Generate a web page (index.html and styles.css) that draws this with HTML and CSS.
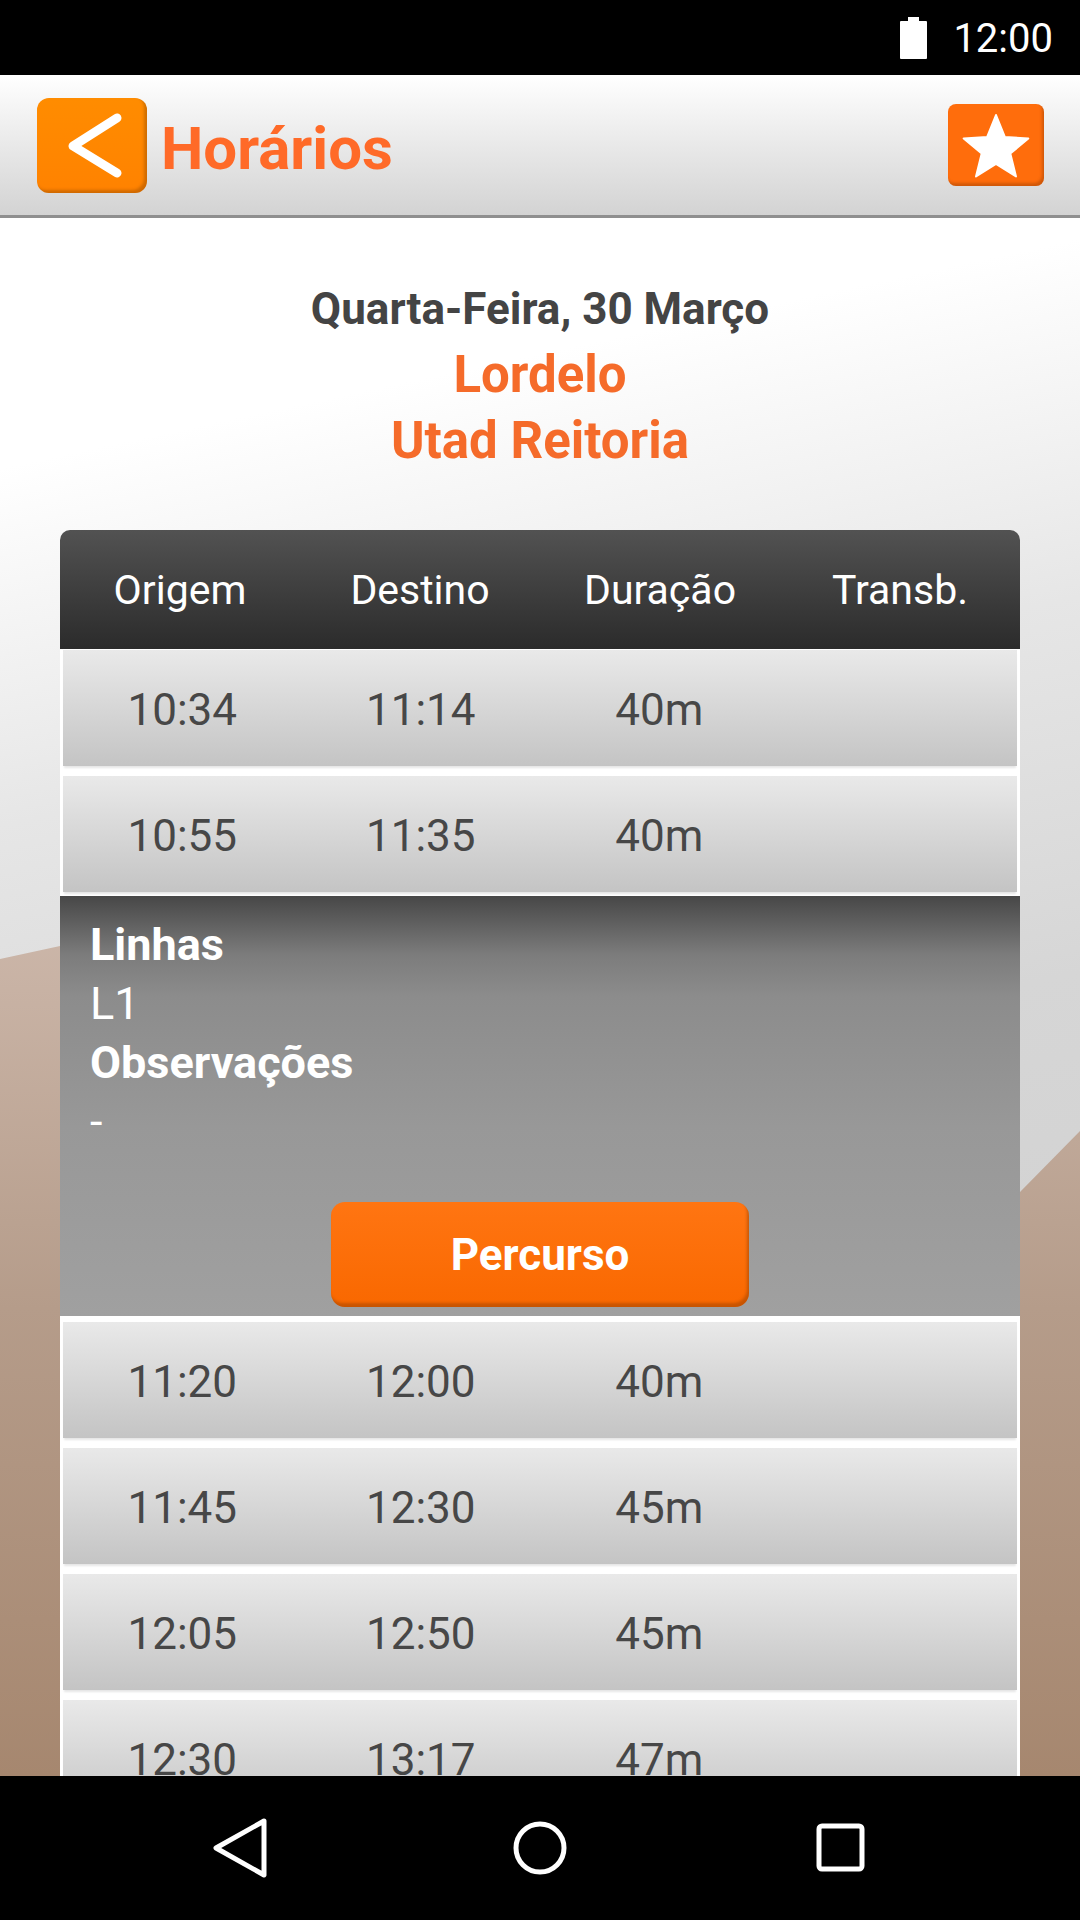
FILE: index.html
```html
<!DOCTYPE html>
<html lang="pt-PT">
<head>
    <meta charset="UTF-8">
    <meta name="viewport" content="width=device-width, initial-scale=1.0">
    <title>Horários</title>
    <link rel="stylesheet" href="styles.css">
</head>
<body>
    <div class="screen">
        <!-- barra de estado -->
        <div class="status-bar">
            <svg class="battery" width="27" height="42" viewBox="0 0 27 42">
                <rect x="8" y="0" width="11" height="5" fill="#fff"/>
                <rect x="0" y="4" width="27" height="38" rx="1" fill="#fff"/>
            </svg>
            <span class="clock">12:00</span>
        </div>

        <header class="app-bar">
            <button class="back-btn" aria-label="Voltar">
                <svg width="110" height="95" viewBox="0 0 110 95">
                    <polyline points="80,20 36,48 80,75" fill="none" stroke="#fff" stroke-width="9" stroke-linecap="round" stroke-linejoin="round"/>
                </svg>
            </button>
            <h1>Horários</h1>
            <button class="fav-btn" aria-label="Favorito">
                <svg width="96" height="82" viewBox="0 0 96 82">
                    <polygon points="48,11 56.8,32.9 80.3,34.5 62.3,49.6 68,72.5 48,60 28,72.5 33.7,49.6 15.7,34.5 39.2,32.9" fill="#fff" stroke="#fff" stroke-width="2" stroke-linejoin="round"/>
                </svg>
            </button>
        </header>

        <main class="content">
            <div class="trip-info">
                <p class="date">Quarta-Feira, 30 Março</p>
                <p class="stop">Lordelo</p>
                <p class="stop">Utad Reitoria</p>
            </div>

            <div class="schedule">
                <div class="schedule-head">
                    <span>Origem</span>
                    <span>Destino</span>
                    <span>Duração</span>
                    <span>Transb.</span>
                </div>
                <div class="schedule-body">
                    <div class="trip-row"><span>10:34</span><span>11:14</span><span>40m</span><span></span></div>
                    <div class="trip-row"><span>10:55</span><span>11:35</span><span>40m</span><span></span></div>

                    <div class="trip-detail">
                        <p class="label">Linhas</p>
                        <p>L1</p>
                        <p class="label">Observações</p>
                        <p>-</p>
                        <button class="route-btn">Percurso</button>
                    </div>

                    <div class="trip-row"><span>11:20</span><span>12:00</span><span>40m</span><span></span></div>
                    <div class="trip-row"><span>11:45</span><span>12:30</span><span>45m</span><span></span></div>
                    <div class="trip-row"><span>12:05</span><span>12:50</span><span>45m</span><span></span></div>
                    <div class="trip-row"><span>12:30</span><span>13:17</span><span>47m</span><span></span></div>
                </div>
            </div>
        </main>

        <!-- barra de navegação -->
        <nav class="nav-bar">
            <svg width="1080" height="144" viewBox="0 0 1080 144">
                <polygon points="264,45 216,72 264,99" fill="none" stroke="#fff" stroke-width="5" stroke-linejoin="round"/>
                <circle cx="540" cy="72" r="24" fill="none" stroke="#fff" stroke-width="5"/>
                <rect x="819" y="50" width="43" height="43" rx="3" fill="none" stroke="#fff" stroke-width="5"/>
            </svg>
        </nav>
    </div>
</body>
</html>
```

FILE: styles.css
```css
body {
    margin: 0;
    font-family: Roboto, "Liberation Sans", sans-serif;
    background: #000;
}

p {
    margin: 0;
}

button {
    font-family: inherit;
    border: none;
    padding: 0;
    cursor: pointer;
}

.screen {
    width: 1080px;
    height: 1920px;
    overflow: hidden;
    display: flex;
    flex-direction: column;
}

/* barra de estado */
.status-bar {
    height: 75px;
    flex-shrink: 0;
    background: #000;
    display: flex;
    justify-content: flex-end;
    align-items: center;
    gap: 26px;
    padding-right: 27px;
}

.battery {
    display: block;
}

.clock {
    color: white;
    font-size: 40px;
    line-height: 1;
    margin-top: 2px;
}

/* cabeçalho */
.app-bar {
    height: 140px;
    flex-shrink: 0;
    background: linear-gradient(to bottom, #ffffff, #d3d3d3);
    border-bottom: 3px solid #8f8f8f;
    display: flex;
    align-items: center;
    padding: 0 36px 0 37px;
}

.back-btn {
    width: 110px;
    height: 95px;
    border-radius: 12px;
    background: linear-gradient(to bottom, #ff8c00, #ff8200);
    box-shadow: inset -3px -3px 3px rgba(120, 60, 0, 0.35);
    display: flex;
}

.app-bar h1 {
    margin: 6px 0 0 14px;
    font-size: 60px;
    font-weight: 700;
    color: #ff6a28;
    flex: 1;
}

.fav-btn {
    width: 96px;
    height: 82px;
    border-radius: 8px;
    background: #ff6d0c;
    box-shadow: inset -2px -3px 3px rgba(120, 50, 0, 0.35);
    display: flex;
}

/* conteúdo */
.content {
    flex: 1;
    position: relative;
    overflow: hidden;
    background: linear-gradient(168deg, #ffffff 0%, #ffffff 14%, #e6e6e6 34%, #d6d6d6 55%, #cccccc 100%);
}

.content::before {
    content: "";
    position: absolute;
    left: 0;
    top: 0;
    width: 100%;
    height: 100%;
    background: linear-gradient(to bottom, #cdb8ab 44%, #b59c8a 70%, #a6876f 100%);
    clip-path: polygon(0 741px, 60px 728px, 300px 690px, 650px 1000px, 1020px 974px, 1080px 913px, 1080px 100%, 0 100%);
}

.trip-info {
    position: relative;
    padding-top: 58px;
    text-align: center;
    font-weight: 700;
}

.date {
    font-size: 44px;
    line-height: 66px;
    color: #444;
}

.stop {
    font-size: 51px;
    line-height: 66px;
    color: #f56b2a;
}

.schedule {
    position: relative;
    margin: 56px 60px 0;
}

.schedule-head {
    height: 119px;
    border-radius: 10px 10px 0 0;
    background: linear-gradient(to bottom, #525252, #2b2b2b);
    display: grid;
    grid-template-columns: repeat(4, 1fr);
    align-items: center;
    text-align: center;
    color: white;
    font-size: 41px;
}

.schedule-body {
    background: white;
    padding: 1px 3px 0;
    display: flex;
    flex-direction: column;
    gap: 10px;
}

.trip-row {
    height: 116px;
    flex-shrink: 0;
    background: linear-gradient(to bottom, #e9e9e9, #c4c4c4);
    box-shadow: 0 3px 2px -1px rgba(0, 0, 0, 0.1);
    display: grid;
    grid-template-columns: repeat(4, 1fr);
    align-items: center;
    text-align: center;
    font-size: 44px;
    color: #474747;
}

.trip-row span {
    padding-top: 4px;
}

.trip-detail {
    height: 420px;
    box-sizing: border-box;
    flex-shrink: 0;
    margin: -6px -3px -4px;
    padding: 19px 30px 9px;
    background: linear-gradient(to bottom, #474747 0%, #7c7c7c 14%, #8c8c8c 24%, #989898 55%, #a0a0a0 100%);
    color: white;
    font-size: 45px;
    line-height: 59px;
}

.trip-detail .label {
    font-weight: 700;
}

.route-btn {
    display: block;
    width: 418px;
    height: 105px;
    margin: 51px auto 0;
    border-radius: 14px;
    background: linear-gradient(to bottom, #ff7512, #f96800);
    box-shadow: inset -2px -4px 3px rgba(140, 60, 0, 0.45);
    color: white;
    font-size: 44px;
    font-weight: 700;
}

/* barra de navegação */
.nav-bar {
    height: 144px;
    flex-shrink: 0;
    background: #000;
}

.nav-bar svg {
    display: block;
}
```
